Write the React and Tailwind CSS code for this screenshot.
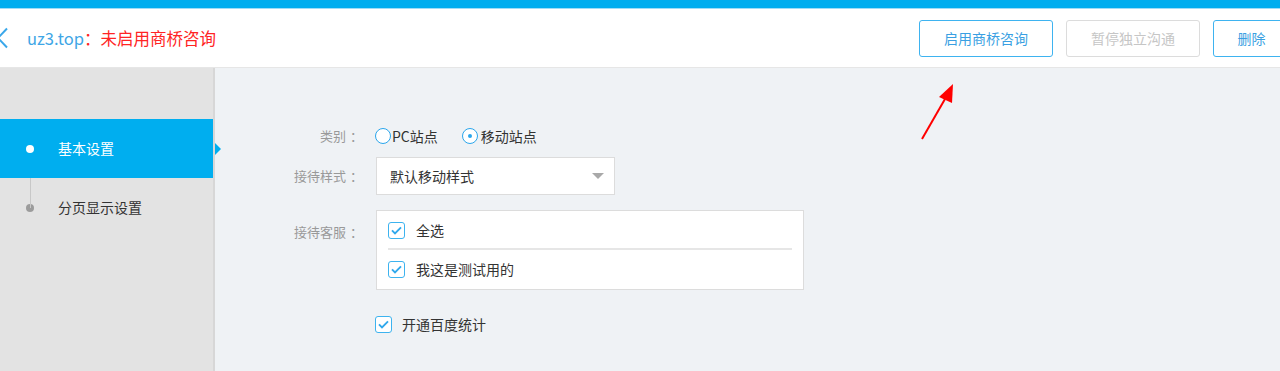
import { useState } from "react";

const FONT = { fontFamily: '"Noto Sans CJK SC", "Open Sans", sans-serif' };

function CheckBox({ checked }) {
  return (
    <span className="flex h-[17px] w-[17px] shrink-0 items-center justify-center rounded-[3px] border-[1.5px] border-[#3db3ef] bg-white">
      {checked && (
        <svg width="11" height="9" viewBox="0 0 11 9" fill="none">
          <path d="M1 4.3 L4 7.4 L10 1.3" stroke="#2fa8ec" strokeWidth="1.9" />
        </svg>
      )}
    </span>
  );
}

function Radio({ checked }) {
  return (
    <span className="flex h-[16px] w-[16px] shrink-0 items-center justify-center rounded-full border-[1.5px] border-[#2aa6ec] bg-white">
      {checked && <span className="h-[4px] w-[4px] rounded-full bg-[#2aa6ec]" />}
    </span>
  );
}

function Label({ text, className = "" }) {
  return (
    <span className={`flex w-[148px] justify-end text-[13px] text-[#999] ${className}`}>
      <span>{text}</span>
      <span className="ml-[4px]">：</span>
    </span>
  );
}

export default function App() {
  const [site, setSite] = useState("mobile");

  return (
    <div className="relative h-[371px] w-[1280px] overflow-hidden bg-[#eff2f5]" style={FONT}>
      {/* top bar */}
      <div className="h-[8px] bg-[#00adef]" />
      <div className="h-[1px] bg-[#9fdcf7]" />

      {/* header */}
      <div className="flex h-[59px] items-center border-b border-[#e6e6e6] bg-white">
        <svg width="12" height="22" viewBox="0 0 12 22" className="ml-[-4px]" fill="none">
          <path d="M11 1.5 L2 11 L11 20.5" stroke="#3aa7ea" strokeWidth="2" />
        </svg>
        <div className="ml-[19px] text-[16.5px] leading-none">
          <span className="text-[#3ea6e6]">uz3.top</span>
          <span className="text-[#ff2424]">：未启用商桥咨询</span>
        </div>
        <div className="ml-auto mr-[-10px] flex gap-[13px] text-[14px]">
          <button className="h-[37px] w-[134px] rounded-[3px] border border-[#3eb3f0] text-[#3a9fe2]">
            启用商桥咨询
          </button>
          <button className="h-[37px] w-[134px] rounded-[3px] border border-[#dcdcdc] text-[#c6c6c6]">
            暂停独立沟通
          </button>
          <button className="h-[37px] w-[77px] rounded-[3px] border border-[#3eb3f0] text-[#3a9fe2]">
            删除
          </button>
        </div>
      </div>

      <div className="flex h-[303px]">
        {/* sidebar */}
        <div className="relative w-[215px] shrink-0 border-r-2 border-[#d7d7d7] bg-[#e3e3e3] pt-[51px]">
          <div className="relative flex h-[59px] items-center bg-[#00aeef] text-[14px] text-white">
            <span className="ml-[26px] h-[8px] w-[8px] rounded-full bg-white" />
            <span className="ml-[24px]">基本设置</span>
            <span className="absolute right-[-8px] top-[24px] h-0 w-0 border-y-[6px] border-l-[6px] border-y-transparent border-l-[#00aeef]" />
          </div>
          <div className="relative flex h-[59px] items-center text-[14px] text-[#333]">
            <span className="absolute left-[30px] top-0 h-[30px] w-[1px] bg-[#c8c8c8]" />
            <span className="ml-[26px] h-[8px] w-[8px] rounded-full bg-[#9c9c9c]" />
            <span className="ml-[24px]">分页显示设置</span>
          </div>
        </div>

        {/* form */}
        <div className="flex-1 pt-[57px] text-[14px] text-[#333]">
          <div className="flex h-[22px] items-center">
            <Label text="类别" />
            <label className="ml-[12px] flex items-center" onClick={() => setSite("pc")}>
              <Radio checked={site === "pc"} />
              <span className="ml-[1px]">PC站点</span>
            </label>
            <label className="ml-[24px] flex items-center" onClick={() => setSite("mobile")}>
              <Radio checked={site === "mobile"} />
              <span className="ml-[3px]">移动站点</span>
            </label>
          </div>

          <div className="mt-[10px] flex items-center">
            <Label text="接待样式" />
            <div className="ml-[13px] flex h-[38px] w-[239px] items-center justify-between border border-[#dcdcdc] bg-white pl-[13px] pr-[10px]">
              <span>默认移动样式</span>
              <span className="h-0 w-0 border-x-[6px] border-t-[6px] border-x-transparent border-t-[#a9a9a9]" />
            </div>
          </div>

          <div className="mt-[15px] flex items-start">
            <Label text="接待客服" className="mt-[12px]" />
            <div className="ml-[13px] w-[428px] border border-[#dcdcdc] bg-white px-[11px]">
              <div className="flex h-[39px] items-center border-b-2 border-[#e6e6e6] pt-[2px]">
                <CheckBox checked />
                <span className="ml-[11px]">全选</span>
              </div>
              <div className="flex h-[39px] items-center">
                <CheckBox checked />
                <span className="ml-[11px]">我这是测试用的</span>
              </div>
            </div>
          </div>

          <div className="mt-[24px] flex items-center">
            <span className="ml-[160px]">
              <CheckBox checked />
            </span>
            <span className="ml-[10px]">开通百度统计</span>
          </div>
        </div>
      </div>

      {/* annotation arrow */}
      <svg className="absolute left-[915px] top-[80px]" width="45" height="65" viewBox="0 0 45 65" fill="none">
        <path d="M7 59 L30 19" stroke="#ff0000" strokeWidth="2" />
        <path d="M38 4 L24 17 L37 23 Z" fill="#ff0000" />
      </svg>
    </div>
  );
}
